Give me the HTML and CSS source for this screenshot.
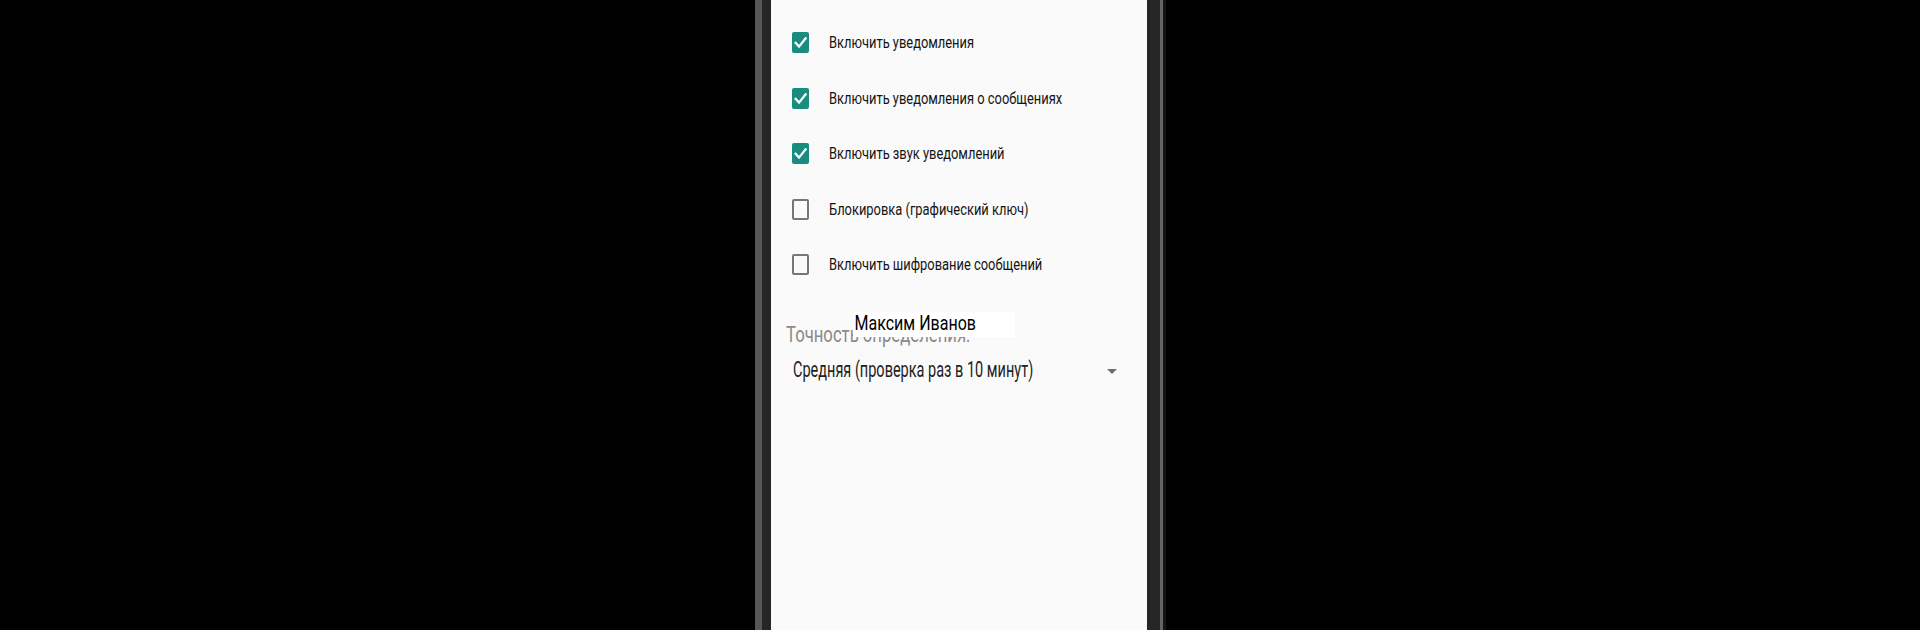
FILE: index.html
```html
<!DOCTYPE html>
<html lang="ru">
<head>
<meta charset="utf-8">
<title>Настройки</title>
<link rel="stylesheet" href="styles.css">
</head>
<body>
<div class="stage">
  <div class="phone">
    <div class="rim">
      <div class="bezel">
        <div class="screen">
          <ul class="prefs">
            <li class="pref"><span class="box checked"><svg viewBox="0 0 17 21"><polyline points="3.6,10.8 7,14.6 13.6,6.4"/></svg></span><span class="pref-text">Включить уведомления</span></li>
            <li class="pref"><span class="box checked"><svg viewBox="0 0 17 21"><polyline points="3.6,10.8 7,14.6 13.6,6.4"/></svg></span><span class="pref-text">Включить уведомления о сообщениях</span></li>
            <li class="pref"><span class="box checked"><svg viewBox="0 0 17 21"><polyline points="3.6,10.8 7,14.6 13.6,6.4"/></svg></span><span class="pref-text">Включить звук уведомлений</span></li>
            <li class="pref"><span class="box"></span><span class="pref-text">Блокировка (графический ключ)</span></li>
            <li class="pref"><span class="box"></span><span class="pref-text">Включить шифрование сообщений</span></li>
          </ul>
          <div class="accuracy">
            <div class="label"><span class="stretch-label">Точность определения:</span></div>
            <div class="spinner">
              <span class="stretch-spin">Средняя (проверка раз в 10 минут)</span>
              <span class="arrow"></span>
            </div>
          </div>
          <div class="name-tag"><span class="stretch-name">Максим Иванов</span></div>
        </div>
      </div>
    </div>
  </div>
</div>
</body>
</html>
```
FILE: styles.css
```css
html, body {
  margin: 0;
  padding: 0;
  background: #000;
  height: 630px;
  overflow: hidden;
}
.stage {
  display: flex;
  justify-content: center;
  height: 630px;
  padding-left: 1px;
}
.phone {
  height: 630px;
  border-right: 3px solid #141414;
  display: flex;
}
.rim {
  border-left: 7px solid #575757;
  border-right: 3px solid #646464;
  display: flex;
}
.bezel {
  border-left: 9px solid #262626;
  border-right: 13px solid #262626;
  display: flex;
}
.screen {
  position: relative;
  width: 376px;
  height: 630px;
  background: #fafafa;
  font-family: Roboto, "Noto Sans", "Liberation Sans", sans-serif;
}
.prefs {
  list-style: none;
  margin: 0;
  padding: 15px 0 0 21px;
}
.pref {
  height: 55.5px;
  display: flex;
  align-items: center;
  gap: 20px;
}
.box {
  width: 17px;
  height: 21px;
  box-sizing: border-box;
  border: 2px solid #767676;
  border-radius: 2px;
  flex: none;
  display: flex;
}
.box.checked {
  background: #1a8c7f;
  border: none;
}
.box svg {
  width: 17px;
  height: 21px;
}
.box polyline {
  fill: none;
  stroke: #fff;
  stroke-width: 2.2;
  stroke-linecap: square;
}
.pref-text {
  font-size: 12.9px;
  color: #141414;
  display: inline-block;
  transform: scaleY(1.26);
}
.accuracy {
  margin-top: 32.5px;
}
.label {
  padding-left: 15px;
  height: 20px;
  line-height: 20px;
}
.stretch-label {
  display: inline-block;
  font-size: 16.7px;
  color: #8a8a8a;
  transform: scaleY(1.3);
}
.spinner {
  margin-top: 16px;
  padding: 0 30px 0 22px;
  height: 20px;
  line-height: 20px;
  display: flex;
  justify-content: space-between;
  align-items: flex-start;
}
.stretch-spin {
  display: inline-block;
  font-size: 14.5px;
  color: #222;
  transform: scaleY(1.46);
}
.arrow {
  margin-top: 7.5px;
  width: 0;
  height: 0;
  border-left: 5px solid transparent;
  border-right: 5px solid transparent;
  border-top: 5px solid #6e6e6e;
}
.name-tag {
  position: absolute;
  left: 82px;
  top: 312px;
  width: 160.5px;
  height: 25px;
  padding-left: 1.5px;
  background: #fff;
  line-height: 22px;
}
.stretch-name {
  display: inline-block;
  font-size: 16px;
  color: #000;
  transform: scaleY(1.3);
}
```
